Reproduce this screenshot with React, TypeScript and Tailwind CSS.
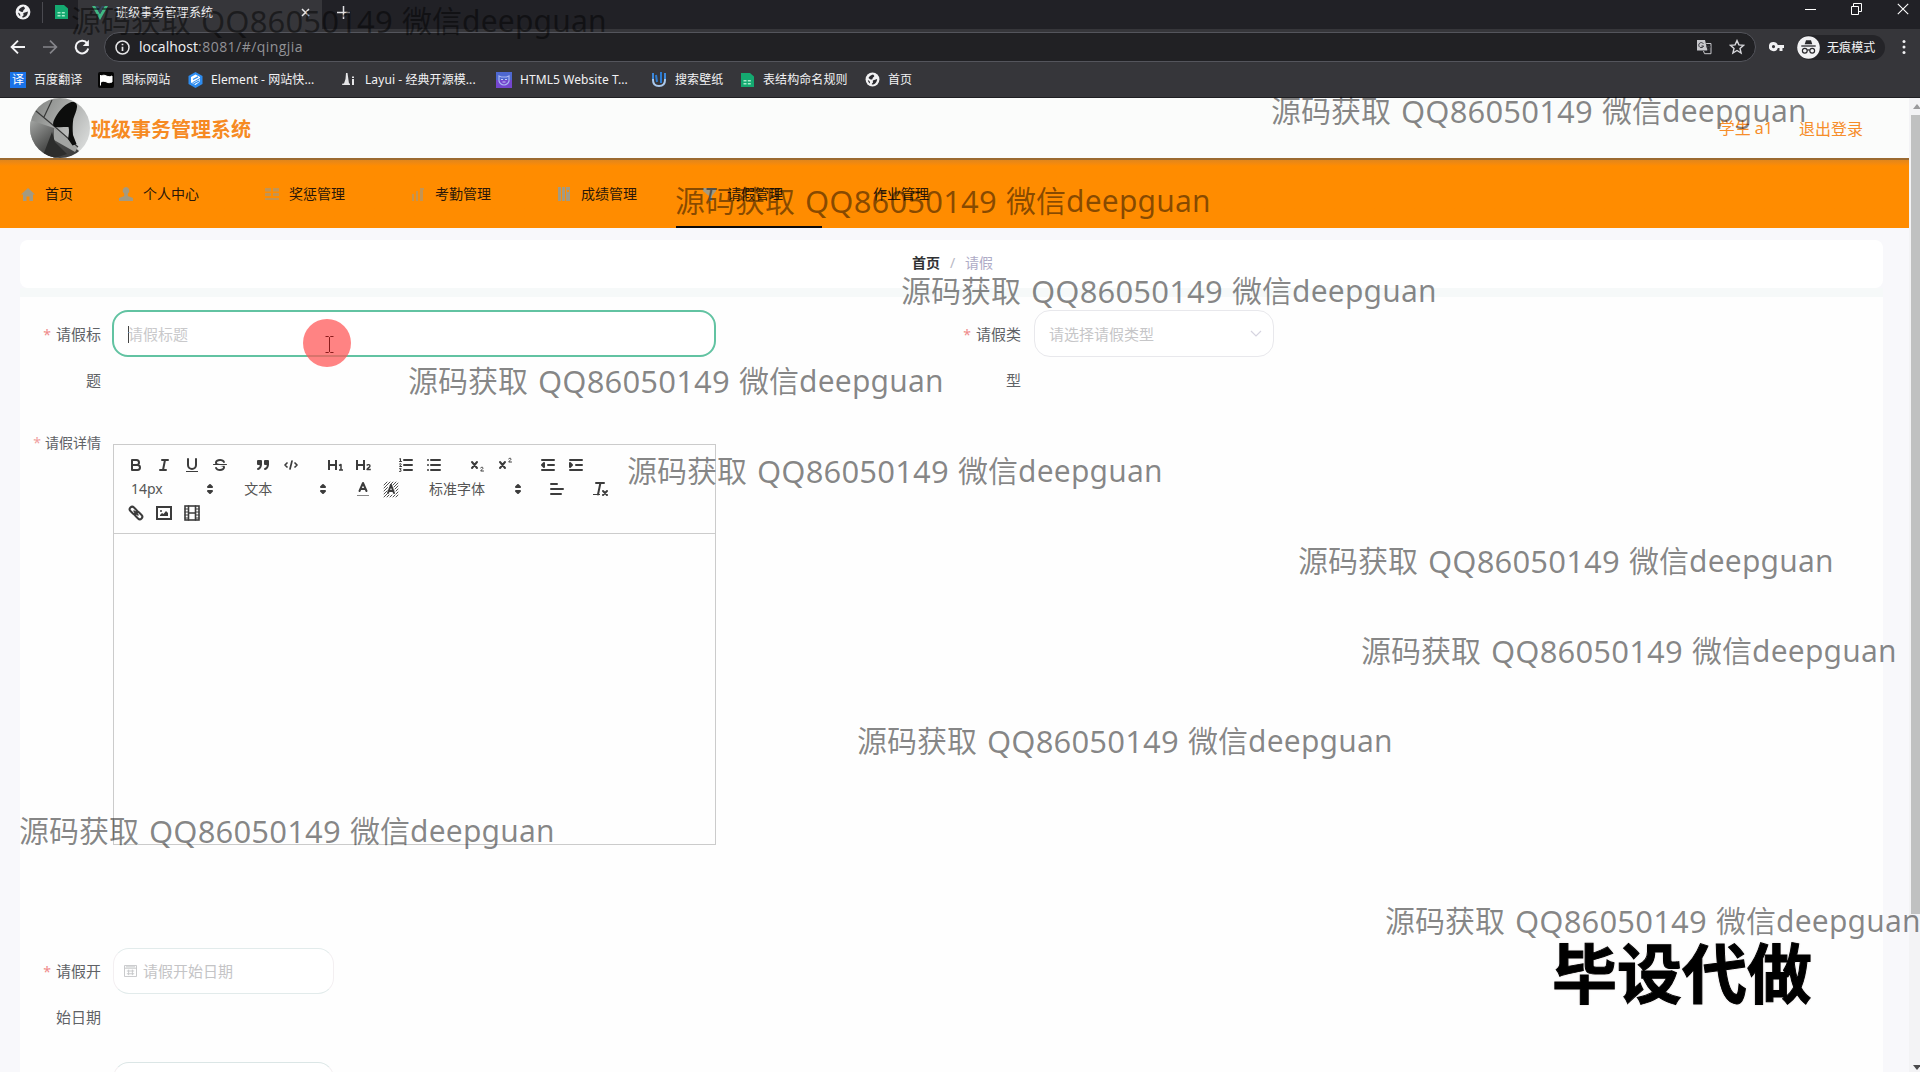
import type { ReactNode } from "react";

const FONT = "font-['Noto_Sans','Noto_Sans_CJK_SC',sans-serif]";

function Globe({ size = 16 }: { size?: number }) {
  return (
    <svg width={size} height={size} viewBox="0 0 16 16" className="shrink-0">
      <circle cx="8" cy="8" r="7.4" fill="#f1f1f3" />
      <path d="M8.600 2.600c-2 .3-4 1.700-4.900 3.700 1 .5 1.800 1.700 3.500 1.700 1.300 0 .6-1.600 1.600-2.300.9-.6 1.300-.7 1-1.600-.2-.6-.6-1-1.200-1.500z M12.900 7.400c-1.200.1-1.800.9-3 1.100-1.300.2-1.900.8-1.500 1.700.3.700.2 1.300-.6 1.900-.4.400-.7.700-.4 1.300 3 .1 5.400-2.200 5.500-6z M3 8.400c.2 1.400 1 2.900 2.200 3.800.2-1.100.1-1.900-.6-2.600-.5-.6-1-.9-1.600-1.200z" fill="#2b2b30" />
    </svg>
  );
}

function Sheet() {
  return (
    <svg width="14" height="16" viewBox="0 0 14 16" className="shrink-0">
      <path d="M1 1h9l4 3.500V15H1z" fill="#14a970" />
      <path d="M3.500 8h3v1.600h-3zM7.800 8h3v1.600h-3zM3.500 11h3v1.600h-3zM7.800 11h3v1.600h-3z" fill="#a6ecc9" />
    </svg>
  );
}

function TabStrip() {
  return (
    <div className="flex h-[29px] items-start bg-[#212126]">
      <div className="flex h-full w-[78px] items-center pb-[5px] pl-[15px]">
        <Globe />
        <div className="ml-[11px] h-[21px] w-px bg-[#4a4a50]" />
        <div className="ml-[11px] flex">
          <Sheet />
        </div>
      </div>
      <div className="flex h-full w-[244px] items-center bg-[#36363a] pb-[4px] pl-[14px]">
        <svg width="16" height="14" viewBox="0 0 16 14">
          <path d="M0 0h3.400L8 8l4.600-8H16L8 14z" fill="#41b883" />
          <path d="M3.400 0H6.200L8 3.200 9.800 0h2.800L8 8z" fill="#35495e" />
        </svg>
        <span className="ml-[8px] w-[185px] text-[12px] leading-[16px] tracking-[0.150px] text-[#f0f0f2]">班级事务管理系统</span>
        <svg width="9" height="9" viewBox="0 0 9 9" stroke="#e8e8ea" strokeWidth="1.500">
          <path d="M1 1l7 7M8 1L1 8" />
        </svg>
      </div>
      <svg width="13" height="13" viewBox="0 0 13 13" stroke="#e0e0e2" strokeWidth="1.500" className="mt-[6px] ml-[15px]">
        <path d="M6.500 0v13M0 6.500h13" />
      </svg>
      <div className="ml-auto flex items-center gap-[35px] pt-[3px] pr-[11px]">
        <svg width="11" height="12" viewBox="0 0 11 12" stroke="#fff" strokeWidth="1">
          <path d="M0 6.500h11" />
        </svg>
        <svg width="11" height="12" viewBox="0 0 11 12" stroke="#fff" fill="none">
          <path d="M.5 3.500h7v8h-7zM2.500 3.500v-3h8v8h-3" />
        </svg>
        <svg width="12" height="12" viewBox="0 0 12 12" stroke="#fff" strokeWidth="1.100" fill="none">
          <path d="M.8.8l10.400 10.400M11.200.8L.8 11.200" />
        </svg>
      </div>
    </div>
  );
}

function AddressBar() {
  return (
    <div className="flex h-[36px] items-center bg-[#36363a] pl-[10px]">
      <svg width="16" height="16" viewBox="0 0 16 16" stroke="#f4f4f6" strokeWidth="1.900" fill="none">
        <path d="M15 8H2M8 1.600L1.600 8 8 14.400" />
      </svg>
      <svg width="16" height="16" viewBox="0 0 16 16" stroke="#85858a" strokeWidth="1.700" fill="none" className="ml-[16px]">
        <path d="M1 8h13M8 1.600L14.400 8 8 14.400" />
      </svg>
      <svg width="16" height="16" viewBox="0 0 16 16" className="ml-[16px]">
        <path d="M13.200 4.400A6.300 6.300 0 1 0 14.200 9.500" stroke="#f4f4f6" strokeWidth="2" fill="none" />
        <path d="M14.900 .8v6.100H8.800z" fill="#f4f4f6" />
      </svg>
      <div className="ml-[14px] flex h-[30px] w-[1652px] items-center rounded-full border border-[#54555c] bg-[#212124] pr-[10px] pl-[10px]">
        <svg width="15" height="15" viewBox="0 0 15 15" fill="none" stroke="#e6e6e8">
          <circle cx="7.500" cy="7.500" r="6.500" strokeWidth="1.500" />
          <path d="M7.500 6.700v4.300M7.500 3.700v1.600" strokeWidth="1.700" />
        </svg>
        <span className="ml-[9px] pb-px font-['Open_Sans',sans-serif] text-[14px] leading-[20px] tracking-[0.450px] text-[#929296]">
          <span className="tracking-[0.050px] text-[#f2f2f4]">localhost</span>:8081/#/qingjia
        </span>
        <svg width="16" height="16" viewBox="0 0 16 16" className="ml-auto">
          <path d="M1 1h8l2.500 10.500H1z" fill="#c8c8cc" />
          <path d="M10.200 4.500H15v10.200H8.500L7.500 12" fill="none" stroke="#c8c8cc" />
          <path d="M7.400 4.800A2.500 2.500 0 1 0 7.600 7H5.400M10.500 7.500h4M12.500 6.500v1M11 8c.5 1.500 1.500 2.600 3 3.400M14 8c-.4 1.600-1.500 3-3 3.900" fill="none" stroke="#34343a" strokeWidth="1" />
        </svg>
        <svg width="16" height="16" viewBox="0 0 16 16" className="ml-[17px]" fill="none" stroke="#d8d8dc" strokeWidth="1.400">
          <path d="M8 1.600l1.900 4.300 4.700.4-3.600 3.100 1.100 4.600L8 11.500 3.900 14 5 9.400 1.400 6.300l4.700-.4z" />
        </svg>
      </div>
      <svg width="16" height="10" viewBox="0 0 16 10" className="ml-[13px]">
        <path fillRule="evenodd" d="M4.500 0a4.600 4.600 0 0 1 4.300 3H15v3h-1.500v3h-3V6H8.800A4.600 4.600 0 1 1 4.500 0zm0 3a1.600 1.600 0 1 0 0 3.200 1.600 1.600 0 0 0 0-3.200z" fill="#f1f1f3" />
      </svg>
      <div className="ml-[12px] flex h-[25px] w-[88px] items-center rounded-full bg-[#242428]">
        <svg width="23" height="23" viewBox="0 0 23 23">
          <circle cx="11.500" cy="11.500" r="11.300" fill="#f1f1f3" />
          <path d="M7.700 8.200L9 4.300h5l1.300 3.900z" fill="#28282c" />
          <path d="M4.300 10h14.400" stroke="#28282c" strokeWidth="1.300" />
          <g fill="none" stroke="#28282c" strokeWidth="1.200">
            <circle cx="7.800" cy="14.700" r="2.400" />
            <circle cx="15.200" cy="14.700" r="2.400" />
            <path d="M10.200 14.200q1.300-.8 2.600 0" />
          </g>
        </svg>
        <span className="ml-[7px] pt-px text-[12px] leading-[16px] tracking-[0.100px] text-[#f4f4f6]">无痕模式</span>
      </div>
      <svg width="4" height="16" viewBox="0 0 4 16" fill="#f1f1f3" className="ml-[17px]">
        <circle cx="2" cy="2.500" r="1.500" />
        <circle cx="2" cy="8" r="1.500" />
        <circle cx="2" cy="13.500" r="1.500" />
      </svg>
    </div>
  );
}

function Bookmark({ icon, label, width }: { icon: ReactNode; label: string; width: string }) {
  return (
    <div className={"flex shrink-0 items-center gap-[8px] " + width}>
      <span className="flex w-[16px] justify-center">{icon}</span>
      <span className="text-[12px] leading-[18px] tracking-[0.080px] whitespace-nowrap text-[#f2f2f4]">{label}</span>
    </div>
  );
}

function Bookmarks() {
  return (
    <div className="flex h-[33px] items-center border-b border-[#1f1f22] bg-[#36363a] pb-[3px] pl-[10px]">
      <Bookmark
        width="w-[88px]"
        label="百度翻译"
        icon={<span className="h-[16px] w-[16px] bg-[#1a73e8] text-center text-[12px] leading-[15px] text-white">译</span>}
      />
      <Bookmark
        width="w-[89px]"
        label="图标网站"
        icon={
          <svg width="16" height="16" viewBox="0 0 16 16">
            <rect width="16" height="16" rx="2" fill="#050505" />
            <path d="M2.500 3v10.500M3 4c2-1 3.500-1 5.500 0s3.500.8 5.500 0v6c-2 .8-3.500 1-5.500 0s-3.500-1-5.500 0z" fill="#fff" stroke="#fff" />
          </svg>
        }
      />
      <Bookmark
        width="w-[154px]"
        label="Element - 网站快..."
        icon={
          <svg width="15" height="16" viewBox="0 0 15 16">
            <path d="M7.500 0l7 4v8l-7 4-7-4V4z" fill="#2d8cf0" />
            <path d="M7.500 2.500l4.500 2.600v1L4.500 10.200v1L12 7v2.500L7.500 13 3 10.500V5z" fill="#fff" />
            <path d="M5 7.500l5-2.600M5.500 12l6-3.300" stroke="#2d8cf0" strokeWidth="1.300" />
          </svg>
        }
      />
      <Bookmark
        width="w-[155px]"
        label="Layui - 经典开源模..."
        icon={
          <svg width="14" height="13" viewBox="0 0 14 13" fill="#e6e6e8">
            <path d="M4 0h1.500L7 10.500h1V12H0l.5-1.500H2L3.500 6zM10 6h2v6h-2zM10 3.500h2v1.500h-2z" />
          </svg>
        }
      />
      <Bookmark
        width="w-[155px]"
        label="HTML5 Website T..."
        icon={
          <svg width="16" height="16" viewBox="0 0 16 16">
            <rect width="16" height="8" fill="#4e68d0" />
            <rect y="8" width="16" height="8" fill="#7446cf" />
            <path d="M3 4l2.500 1h5L13 4v5q-1 3.500-5 4-4-.5-5-4z" fill="none" stroke="#a8b6f2" strokeWidth="1.200" />
            <path d="M5 7.500h2M9 7.500h2M6.500 10h3" stroke="#c8c8f8" strokeWidth="1.200" />
          </svg>
        }
      />
      <Bookmark
        width="w-[88px]"
        label="搜索壁纸"
        icon={
          <svg width="16" height="16" viewBox="0 0 16 16" fill="none" strokeWidth="2">
            <path d="M2 1v7q0 6 6 6t6-6V1" stroke="#a9c9ee" />
            <path d="M5 3l1 7M10 0v11" stroke="#2c7bd0" />
            <path d="M2 1v6M14 1v6" stroke="#3d88da" />
          </svg>
        }
      />
      <Bookmark width="w-[125px]" label="表结构命名规则" icon={<Sheet />} />
      <Bookmark width="w-[60px]" label="首页" icon={<Globe size={15} />} />
    </div>
  );
}

function Avatar() {
  return (
    <svg width="60" height="60" viewBox="0 0 60 60" className="shrink-0">
      <defs>
        <clipPath id="avatarClip">
          <circle cx="30" cy="30" r="30" />
        </clipPath>
        <linearGradient id="avatarWall" x1="0" y1="0" x2="1" y2="0.600">
          <stop offset="0" stopColor="#7c7e7c" />
          <stop offset="0.450" stopColor="#a2a4a2" />
          <stop offset="1" stopColor="#d4d6d5" />
        </linearGradient>
        <linearGradient id="avatarFloor" x1="0" y1="0" x2="1" y2="1">
          <stop offset="0" stopColor="#a4a6a4" />
          <stop offset="0.500" stopColor="#4a4b4a" />
          <stop offset="1" stopColor="#3a3a3a" />
        </linearGradient>
      </defs>
      <g clipPath="url(#avatarClip)">
        <rect width="60" height="60" fill="url(#avatarWall)" />
        <path d="M0 22l24 8 26 24 0 10H0z" fill="url(#avatarFloor)" />
        <path d="M24 30l24 19-3 5-21-12z" fill="#a2a4a2" />
        <path d="M22 34l3 10 12 12-12 4H12z" fill="#2c2d2c" />
        <path d="M6 13l18 15M24 28l24 21M22 2l-8 17" stroke="#383938" strokeWidth="1.200" fill="none" />
        <path d="M40 4.500c4-1.500 7.500.5 7 4.500-.3 4-2.500 8-3.700 12-.8 5-.8 11-.3 16l3.500 9-4 1.500-4.500-6.500c.8-4 1.500-9 .5-12-5 0-9 .5-13 0-3-.5-3-4-1-8 3-6 9-14 15.500-16.500z" fill="#0c0d0c" />
      </g>
    </svg>
  );
}

function SiteHeader() {
  return (
    <div className="flex h-[60px] w-[1909px] items-center bg-[#fbfcfb] pr-[46px] pl-[30px]">
      <Avatar />
      <span className="pt-[3px] pl-px text-[20px] leading-[28px] font-bold text-[#f68a23]">班级事务管理系统</span>
      <span className="ml-auto text-[16px] leading-[24px] text-[#f68d2a]">学生 a1</span>
      <span className="ml-[26px] pt-px text-[16px] leading-[24px] text-[#f68d2a]">退出登录</span>
    </div>
  );
}

const navItems: { label: string; icon: ReactNode }[] = [
  { label: "首页", icon: <path d="M7 1L0 7.500h2V14h3.500V9.500h3V14H12V7.500h2z" /> },
  { label: "个人中心", icon: <path d="M7 0a3.500 3.500 0 0 1 1.800 6.400V9L14 11v3H0v-3l5.200-2V6.400A3.500 3.500 0 0 1 7 0z" /> },
  { label: "奖惩管理", icon: <path d="M0 1h6v3.500H0zM8 1h6v3.500H8zM0 6h6v3H0zM8 6h6v3H8zM0 11h14v2H0z" /> },
  { label: "考勤管理", icon: <path d="M1 7h2v7H1zM5 4h2v10H5zM9 1h4v2h-1v11H9z" /> },
  { label: "成绩管理", icon: <path d="M1 0h3v14H1zM5 0h3v14H5zM9 0h4v14H9zM10 3h2v2h-2z" fillRule="evenodd" /> },
  { label: "请假管理", icon: <path d="M0 1h13v3l-4 5v5H6V9L0 4z" /> },
  { label: "作业管理", icon: null },
];

function NavBar() {
  return (
    <div className="flex h-[70px] w-[1909px] border-t-2 border-[#9b6a30] bg-linear-to-b from-[#e2861a] to-[#ff8c00] to-[6px]">
      {navItems.map((n, i) => (
        <div
          key={n.label}
          className={
            (i === 0 ? "w-[92px] pl-[21px] " : "w-[146px] pl-[27px] ") +
            "flex h-full shrink-0 items-center gap-[10px] border-b-2 pt-[2px] " +
            (i === 5 ? "border-[#0d0a08]" : "border-transparent")
          }
        >
          <svg width="14" height="14" viewBox="0 0 14 14" fill={i === 3 || i === 2 ? "#c49452" : "#a39a82"}>
            {n.icon}
          </svg>
          <span className="text-[14px] leading-[20px] whitespace-nowrap text-[#2b1708]">{n.label}</span>
        </div>
      ))}
    </div>
  );
}

function TIcon({ children }: { children: ReactNode }) {
  return (
    <span className="flex h-[24px] w-[28px] items-center justify-center">
      <svg width="18" height="18" viewBox="0 0 18 18" fill="none" stroke="#3c3c3c" strokeWidth="2" strokeLinecap="round" strokeLinejoin="round">
        {children}
      </svg>
    </span>
  );
}

function Picker({ label, width }: { label: string; width: string }) {
  return (
    <div className={"mr-[15.300px] flex h-[24px] items-center justify-between pr-px pl-[9px] " + width}>
      <span className="text-[14px] leading-[22px] text-[#555]">{label}</span>
      <svg width="18" height="18" viewBox="0 0 18 18" fill="#3c3c3c" stroke="#3c3c3c" strokeWidth="2" strokeLinejoin="round">
        <path d="M7 11l2 2 2-2zM7 7l2-2 2 2z" />
      </svg>
    </div>
  );
}

function Group({ children }: { children: ReactNode }) {
  return <div className="mr-[15.300px] flex">{children}</div>;
}

const solid = { fill: "#3c3c3c", stroke: "none" };

function EditorToolbar() {
  return (
    <div className="h-[89px] border-b border-[#ccc] pt-[8px] pl-[8px]">
      <div className="flex h-[24px]">
        <Group>
          <TIcon>
            <path d="M5 4h4.500a2.500 2.500 0 0 1 0 5H5zM5 9h5.500a2.500 2.500 0 0 1 0 5H5z" />
          </TIcon>
          <TIcon>
            <path d="M7 4h6M5 14h6M8 14l2-10" />
          </TIcon>
          <TIcon>
            <path d="M5 3v6a4.010 4.010 0 0 0 4 4 4.010 4.010 0 0 0 4-4V3" />
            <rect x="3" y="15" width="12" height="1" {...solid} />
          </TIcon>
          <TIcon>
            <path d="M15.500 8.500h-13" strokeWidth="1" />
            <path d="M9.007 8C6.542 7.791 6 7.519 6 6.500 6 5.792 7.283 5 9 5c1.571 0 2.765.679 2.969 1.309a1 1 0 0 0 1.900-.617C13.356 4.106 11.354 3 9 3 6.200 3 4 4.538 4 6.500a3.200 3.200 0 0 0 .5 1.843zM8.984 10C11.457 10.208 12 10.479 12 11.500c0 .708-1.283 1.500-3 1.500-1.571 0-2.765-.679-2.969-1.309a1 1 0 1 0-1.900.617C4.644 13.894 6.646 15 9 15c2.800 0 5-1.538 5-3.500a3.200 3.200 0 0 0-.5-1.843z" {...solid} />
          </TIcon>
        </Group>
        <Group>
          <TIcon>
            <g fill="#3c3c3c">
              <rect x="4" y="5" width="3" height="3" />
              <rect x="11" y="5" width="3" height="3" />
            </g>
            <path d="M7 8c0 4.031-3 5-3 5M14 8c0 4.031-3 5-3 5" />
          </TIcon>
          <TIcon>
            <path d="M5 7L3 9l2 2M13 7l2 2-2 2M10 5l-2 8" strokeWidth="1.700" />
          </TIcon>
        </Group>
        <Group>
          <TIcon>
            <path d="M10 4v10M3 4v10M3 9h7" strokeLinecap="butt" />
            <path d="M13 9.500l2-1V14M13 14h4" strokeWidth="1.500" strokeLinecap="butt" />
          </TIcon>
          <TIcon>
            <path d="M10 4v10M3 4v10M3 9h7" strokeLinecap="butt" />
            <path d="M12.700 9.500c1-1.400 3.300-1 3.300.4 0 1.300-3 2.500-3 3.600h3.800" strokeWidth="1.400" strokeLinecap="butt" />
          </TIcon>
        </Group>
        <Group>
          <TIcon>
            <path d="M7 4h8M7 9h8M7 14h8" />
            <path d="M2.500 5.500h2M3.500 5.500V2.500l-.9.400M2.500 8q2-1 1.700.3L2.600 10.500h2M2.500 12.700h1.700L3.300 14q1.500.3.500 1.400H2.500" strokeWidth="1" />
          </TIcon>
          <TIcon>
            <path d="M6 4h9M6 9h9M6 14h9M3 4h0M3 9h0M3 14h0" />
          </TIcon>
        </Group>
        <Group>
          <TIcon>
            <path d="M4 6l5 6M9 6l-5 6" />
            <path d="M12.700 11.800c1-1.100 2.600-.5 2.300.5-.3.900-2 1.400-2.300 2.700h2.800" strokeWidth="1" />
          </TIcon>
          <TIcon>
            <path d="M4 6l5 6M9 6l-5 6" />
            <path d="M12.700 2.800c1-1.100 2.600-.5 2.300.5-.3.900-2 1.400-2.300 2.700h2.800" strokeWidth="1" />
          </TIcon>
        </Group>
        <Group>
          <TIcon>
            <path d="M3 14h12M3 4h12M9 9h6M5 7v4L3 9z" />
          </TIcon>
          <TIcon>
            <path d="M3 14h12M3 4h12M9 9h6M3 7v4l2-2z" />
          </TIcon>
        </Group>
      </div>
      <div className="flex h-[24px] items-center">
        <Picker label="14px" width="w-[98px]" />
        <Picker label="文本" width="w-[98px]" />
        <Group>
          <TIcon>
            <rect x="3" y="15" width="12" height="1" fill="#888" stroke="none" />
            <path d="M5.500 11L9 3l3.500 8M11.630 9H6.380" />
          </TIcon>
          <TIcon>
            <path
              d="M2 5l3-3M2 8l6-6M2 11l3.500-3.500M2 14l3-3M2 17l3-3M5 17l2-2M8 17l2-2M11 17l2-2M14 17l2-2M8 5l3-3M11 5l3-3M12 7l4-4M13 9l3-3M14 11l2-2M14 14l2-2"
              strokeWidth="0.900"
            />
            <path d="M6 13l3-8 3 8M11.500 11h-5" />
          </TIcon>
        </Group>
        <Picker label="标准字体" width="w-[108px]" />
        <Group>
          <TIcon>
            <path d="M3 9h12M3 14h10M3 4h6" />
          </TIcon>
        </Group>
        <Group>
          <TIcon>
            <path d="M5 3h8M7 14.500L9.300 3.500M12 11l4 4M16 11l-4 4" />
            <rect x="2" y="14" width="7" height="1" {...solid} />
          </TIcon>
        </Group>
      </div>
      <div className="flex h-[24px]">
        <TIcon>
          <path d="M7 7l4 4" strokeWidth="1.600" />
          <rect x="2.200" y="4" width="8.500" height="5" rx="2.500" transform="rotate(45 6.400 6.500)" />
          <rect x="7.300" y="9" width="8.500" height="5" rx="2.500" transform="rotate(45 11.600 11.500)" />
        </TIcon>
        <TIcon>
          <rect x="2" y="3" width="14" height="12" strokeLinejoin="miter" />
          <circle cx="6" cy="7" r="1" {...solid} />
          <path d="M5 12v-1l2-2 1.500 1L11 7l2 2v3z" {...solid} />
        </TIcon>
        <TIcon>
          <rect x="2" y="2" width="14" height="14" strokeWidth="1.600" strokeLinejoin="miter" />
          <path d="M5.500 2v14M12.500 2v14M5.500 9h7" strokeWidth="1.600" />
          <path d="M2 5h3M2 8h3M2 11h3M2 14h3M13 5h3M13 8h3M13 11h3M13 14h3" strokeWidth="1" />
        </TIcon>
      </div>
    </div>
  );
}

function Label({ lines, className = "" }: { lines: string[]; className?: string }) {
  return (
    <div className={"flex w-[81px] shrink-0 flex-col items-end text-[15px] text-[#606266] " + className}>
      {lines.map((l, i) => (
        <span key={l} className="flex h-[46px] items-center">
          {i === 0 && <span className="mr-[5px] text-[14px] text-[#f08a8a]">*</span>}
          {l}
        </span>
      ))}
    </div>
  );
}

function Form() {
  return (
    <div className="h-[775px] w-[1863px] bg-[#fefefe] pt-[13px]">
      <div className="flex h-[134px]">
        <Label lines={["请假标", "题"]} className="pt-px" />
        <div className="ml-[11px] flex h-[47px] w-[604px] items-center rounded-[16px] border-2 border-[#62c3a2] bg-white pt-px pl-[14px]">
          <span className="h-[17px] w-px bg-[#444]" />
          <span className="-ml-px text-[15px] text-[#c9c9cb]">请假标题</span>
        </div>
        <Label lines={["请假类", "型"]} className="ml-[224px] pt-px" />
        <div className="ml-[13px] flex h-[47px] w-[240px] items-center justify-between rounded-[16px] border border-[#e8e8ec] bg-white pt-px pr-[11px] pl-[14px]">
          <span className="text-[15px] text-[#c6c6c8]">请选择请假类型</span>
          <svg width="12" height="8" viewBox="0 0 12 8" fill="none" stroke="#d6d4e0" strokeWidth="1.200">
            <path d="M1 1l5 5 5-5" />
          </svg>
        </div>
      </div>
      <div className="flex h-[504px]">
        <div className="-mt-[2px] flex h-0 w-[81px] items-center justify-end text-[14px] text-[#606266]">
          <span className="mr-[4px] text-[#f0a0a0]">*</span>请假详情
        </div>
        <div className="ml-[12px] h-[401px] w-[603px] border border-[#cbcbcb]">
          <EditorToolbar />
        </div>
      </div>
      <div className="flex h-[114px]">
        <Label lines={["请假开", "始日期"]} />
        <div className="ml-[12px] flex h-[46px] w-[221px] items-center rounded-[16px] border border-x-[#f3eff1] border-y-[#e2ebeb] bg-white pl-[10px]">
          <svg width="13" height="12" viewBox="0 0 14 13" fill="none" stroke="#c4c6c8">
            <path d="M.5.500h13v12H.5zM.5 3.500h13M2 2h10M3 6.500h8M3 9.500h8M5 5v6M9 5v6" />
          </svg>
          <span className="ml-[6px] text-[15px] text-[#c4c4c6]">请假开始日期</span>
        </div>
      </div>
      <div className="ml-[93px] h-[46px] w-[221px] rounded-[16px] border border-x-[#f3eff1] border-y-[#dbe6e6] bg-white" />
    </div>
  );
}

const watermarks: [number, number][] = [
  [71, 21],
  [1271, 111],
  [675, 201],
  [901, 291],
  [408, 381],
  [627, 471],
  [1298, 561],
  [1361, 651],
  [857, 741],
  [19, 831],
  [1385, 921],
];

function Watermark({ x, y }: { x: number; y: number }) {
  return (
    <div
      className={"pointer-events-none absolute flex h-[44px] items-center text-[30px] leading-[44px] whitespace-nowrap text-black/47 " + FONT}
      style={{ left: x, top: y - 22 }}
    >
      <span className="w-[130px]">源码获取</span>
      <span className="w-[201px] text-[31px] tracking-[0.150px]">QQ86050149</span>
      <span className="w-[60px]">微信</span>
      <span className="tracking-[0.200px]">deepguan</span>
    </div>
  );
}

export default function App() {
  return (
    <div className={"relative h-[1072px] w-[1920px] overflow-hidden bg-[#f8f8fb] " + FONT}>
      <TabStrip />
      <AddressBar />
      <Bookmarks />
      <div className="flex h-[974px]">
        <div className="w-[1909px]">
          <SiteHeader />
          <NavBar />
          <div className="px-[20px] pt-[12px]">
            <div className="flex h-[48px] w-[1863px] items-center justify-center rounded-[8px] bg-white pb-[3px] pl-[2px] text-[14px]">
              <span className="font-bold text-[#303133]">首页</span>
              <span className="w-[25px] text-center text-[#b8b8c4]">/</span>
              <span className="text-[#aeabc6]">请假</span>
            </div>
            <div className="h-[9px] w-[1863px] bg-[#f6f9f9]" />
            <Form />
          </div>
        </div>
        <div className="flex w-[11px] flex-col items-end bg-[#f3f3f5]">
          <div className="flex h-[17px] w-[9px] items-center justify-end">
            <svg width="7" height="5" viewBox="0 0 7 5" fill="#9a9a9c">
              <path d="M0 5l4-5 4 5z" />
            </svg>
          </div>
          <div className="h-[799px] w-[9px] bg-[#c0c1c1]" />
          <svg width="7" height="5" viewBox="0 0 7 5" fill="#4a4a4c" className="mt-auto mb-[2px]">
            <path d="M0 0h8l-4 5z" />
          </svg>
        </div>
      </div>

      <div className="pointer-events-none absolute top-[319px] left-[303px] flex h-[48px] w-[48px] items-center justify-center rounded-full bg-[#ff5a5a]/75">
        <svg width="9" height="17" viewBox="0 0 9 17" fill="none" stroke="#8a1c1c" className="mt-[2px] ml-[5px]">
          <path d="M.5.500h3l1 1 1-1h3M.5 16.500h3l1-1 1 1h3M4.500 1.500v14" />
        </svg>
      </div>

      {watermarks.map(([x, y]) => (
        <Watermark key={y} x={x} y={y} />
      ))}

      <div className="pointer-events-none absolute top-[928px] left-[1552px] text-[65px] leading-[90px] font-bold whitespace-nowrap text-black [-webkit-text-stroke:1px_black] [text-shadow:0_0_3px_#fff,0_0_2px_#a99]">
        毕设代做
      </div>
    </div>
  );
}
